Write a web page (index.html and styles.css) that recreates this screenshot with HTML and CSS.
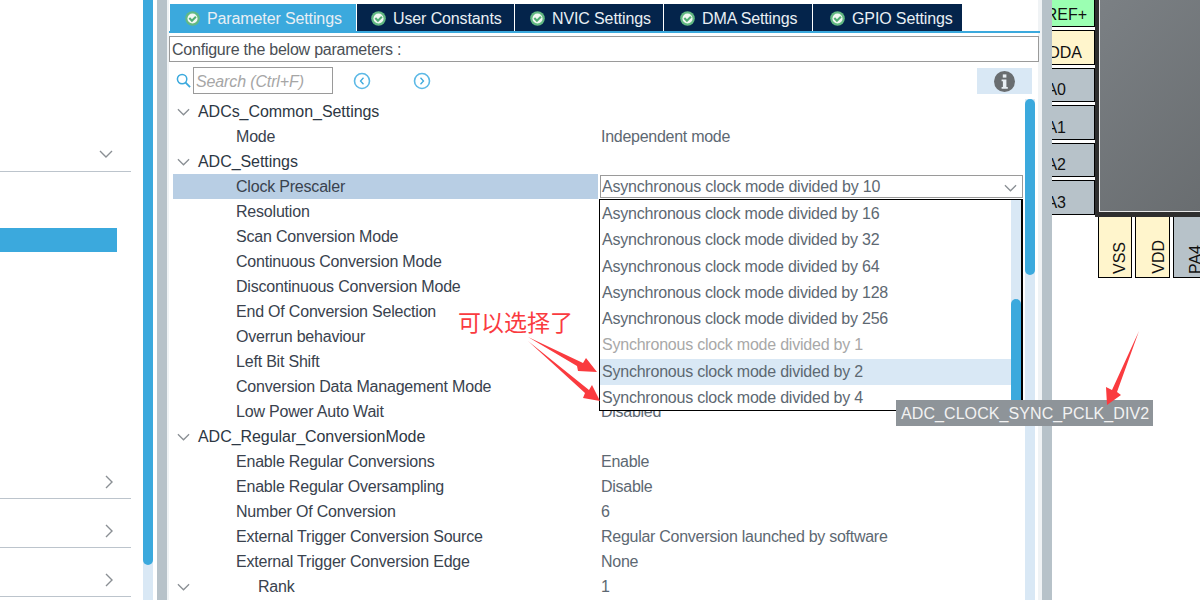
FILE: index.html
```html
<!DOCTYPE html>
<html lang="en">
<head>
<meta charset="utf-8">
<title>ADC Configuration</title>
<link rel="stylesheet" href="styles.css">
</head>
<body>
<svg class="defs" width="0" height="0" aria-hidden="true">
  <symbol id="ok" viewBox="0 0 16 16">
    <circle cx="8" cy="8" r="7.8" fill="#62b983"/>
    <circle cx="8" cy="8" r="5.4" fill="#f2f8f4"/>
    <path d="M4.6 7.4 7.4 10.4 11.6 6.2" fill="none" stroke="#4fae73" stroke-width="2.2"/>
  </symbol>
  <symbol id="down" viewBox="0 0 14 8"><path d="M1 1 7 7 13 1" fill="none" stroke="#8a8f94" stroke-width="1.4"/></symbol>
  <symbol id="right" viewBox="0 0 8 14"><path d="M1 1 7 7 1 13" fill="none" stroke="#8a8f94" stroke-width="1.4"/></symbol>
</svg>
<div class="app">
  <aside class="sidebar">
    <div class="side-row side-first"><svg class="chev-down"><use href="#down"/></svg></div>
    <div class="side-selected"></div>
    <div class="side-row side-tall"><svg class="chev-right"><use href="#right"/></svg></div>
    <div class="side-row"><svg class="chev-right"><use href="#right"/></svg></div>
    <div class="side-row"><svg class="chev-right"><use href="#right"/></svg></div>
  </aside>
  <div class="side-scroll"><div class="side-thumb"></div></div>
  <div class="divider"></div>
  <main class="panel">
    <nav class="tabs">
      <div class="tab tab-active w186"><svg class="ok"><use href="#ok"/></svg>Parameter Settings</div>
      <div class="tab w157"><svg class="ok"><use href="#ok"/></svg>User Constants</div>
      <div class="tab w148"><svg class="ok"><use href="#ok"/></svg>NVIC Settings</div>
      <div class="tab w148b"><svg class="ok"><use href="#ok"/></svg>DMA Settings</div>
      <div class="tab w149"><svg class="ok"><use href="#ok"/></svg>GPIO Settings</div>
    </nav>
    <div class="config-box">Configure the below parameters :</div>
    <div class="toolbar">
      <svg class="search-icon" viewBox="0 0 16 16"><circle cx="6.5" cy="6.5" r="5" fill="none" stroke="#3ba9dd" stroke-width="1.6"/><path d="M10 10 15 15" stroke="#3ba9dd" stroke-width="2"/></svg>
      <div class="search">Search (Ctrl+F)</div>
      <svg class="nav-icon nav-prev" viewBox="0 0 18 18"><circle cx="9" cy="9" r="7.5" fill="none" stroke="#5cb9e6" stroke-width="1.6"/><path d="M10.5 5.8 7.5 9 10.5 12.2" fill="none" stroke="#3ba9dd" stroke-width="1.3"/></svg>
      <svg class="nav-icon nav-next" viewBox="0 0 18 18"><circle cx="9" cy="9" r="7.5" fill="none" stroke="#5cb9e6" stroke-width="1.6"/><path d="M7.5 5.8 10.5 9 7.5 12.2" fill="none" stroke="#3ba9dd" stroke-width="1.3"/></svg>
      <div class="info"><svg class="info-icon" viewBox="0 0 21 21"><circle cx="10.5" cy="10.5" r="10.5" fill="#696d70"/><rect x="8.8" y="3.4" width="3.6" height="3.2" fill="#e8eef3"/><path d="M7.6 8.4h4.8v7.6h1.4v1.8H7.6V16h1.3v-5.8H7.6z" fill="#e8eef3"/></svg></div>
    </div>
    <div class="tree-wrap">
      <div class="tree">
        <div class="row group"><svg class="tw"><use href="#down"/></svg><span class="name">ADCs_Common_Settings</span></div>
        <div class="row"><span class="name">Mode</span><span class="val">Independent mode</span></div>
        <div class="row group"><svg class="tw"><use href="#down"/></svg><span class="name">ADC_Settings</span></div>
        <div class="row row-sel"><span class="name">Clock Prescaler</span></div>
        <div class="row"><span class="name">Resolution</span></div>
        <div class="row"><span class="name">Scan Conversion Mode</span></div>
        <div class="row"><span class="name">Continuous Conversion Mode</span></div>
        <div class="row"><span class="name">Discontinuous Conversion Mode</span></div>
        <div class="row"><span class="name">End Of Conversion Selection</span></div>
        <div class="row"><span class="name">Overrun behaviour</span></div>
        <div class="row"><span class="name">Left Bit Shift</span></div>
        <div class="row"><span class="name">Conversion Data Management Mode</span></div>
        <div class="row"><span class="name">Low Power Auto Wait</span><span class="val">Disabled</span></div>
        <div class="row group"><svg class="tw"><use href="#down"/></svg><span class="name">ADC_Regular_ConversionMode</span></div>
        <div class="row"><span class="name">Enable Regular Conversions</span><span class="val">Enable</span></div>
        <div class="row"><span class="name">Enable Regular Oversampling</span><span class="val">Disable</span></div>
        <div class="row"><span class="name">Number Of Conversion</span><span class="val">6</span></div>
        <div class="row"><span class="name">External Trigger Conversion Source</span><span class="val">Regular Conversion launched by software</span></div>
        <div class="row"><span class="name">External Trigger Conversion Edge</span><span class="val">None</span></div>
        <div class="row sub"><svg class="tw"><use href="#down"/></svg><span class="name">Rank</span><span class="val">1</span></div>
      </div>
      <div class="tree-scroll"><div class="tree-thumb"></div></div>
    </div>
  </main>
  <div class="divider"></div>
  <section class="chip-area">
    <div class="pins-left">
      <div class="pin pin-green pin-a">VREF+</div>
      <div class="pin pin-yellow pin-b">VDDA</div>
      <div class="pin pin-grey pin-c">PA0</div>
      <div class="pin pin-grey pin-c">PA1</div>
      <div class="pin pin-grey pin-c">PA2</div>
      <div class="pin pin-grey pin-c">PA3</div>
    </div>
    <div class="chip-col">
      <div class="chip"></div>
      <div class="pins-bottom">
        <div class="bpin pin-yellow w34"><span>VSS</span></div>
        <div class="bpin pin-yellow w35"><span>VDD</span></div>
        <div class="bpin pin-grey w27"><span>PA4</span></div>
      </div>
    </div>
  </section>

  <div class="combo">Asynchronous clock mode divided by 10<svg class="combo-chev"><use href="#down"/></svg></div>
  <div class="popup">
    <ul class="popup-list">
      <li>Asynchronous clock mode divided by 16</li>
      <li>Asynchronous clock mode divided by 32</li>
      <li>Asynchronous clock mode divided by 64</li>
      <li>Asynchronous clock mode divided by 128</li>
      <li>Asynchronous clock mode divided by 256</li>
      <li class="disabled">Synchronous clock mode divided by 1</li>
      <li class="hover">Synchronous clock mode divided by 2</li>
      <li>Synchronous clock mode divided by 4</li>
    </ul>
    <div class="popup-scroll"><div class="popup-thumb"></div></div>
  </div>
  <div class="tooltip">ADC_CLOCK_SYNC_PCLK_DIV2</div>
  <div class="note" lang="zh">可以选择了</div>
  <svg class="arrows" viewBox="0 0 1200 600" aria-hidden="true">
    <path d="M528 337 583 363 586 358 597 372 578 371 577 366Z" fill="#fa3b3f"/>
    <path d="M528 341 589 390 592 385 600 401 583 398 585 393Z" fill="#fa3b3f"/>
    <path d="M1139 331 1117 392 1121 395 1107 405 1106 387 1112 390Z" fill="#fa3b3f"/>
  </svg>
</div>
</body>
</html>
```

FILE: styles.css
```css
* { box-sizing: border-box; }
html, body { margin: 0; padding: 0; }
body { width: 1200px; height: 600px; overflow: hidden; background: #fff; font-family: "Liberation Sans", Arial, sans-serif; font-size: 16px; letter-spacing: -0.2px; color: #39424e; }
.defs { position: absolute; }
.app { position: relative; width: 1200px; height: 600px; display: flex; overflow: hidden; }

/* left sidebar */
.sidebar { width: 143px; flex: none; display: flex; flex-direction: column; }
.side-row { width: 131px; height: 49px; border-bottom: 1px solid #bcc4cc; display: flex; align-items: center; justify-content: flex-end; padding: 15px 18px 0 0; }
.side-first { height: 172px; padding-top: 136px; }
.side-selected { width: 117px; height: 24px; margin-top: 56px; background: #3ba9dd; }
.side-tall { height: 247px; padding-top: 214px; }
.chev-down { width: 14px; height: 8px; }
.chev-right { width: 8px; height: 14px; }
.side-scroll { width: 10px; flex: none; background: #d9e8f5; }
.side-thumb { height: 565px; background: #3ba9dd; border-radius: 0 0 5px 5px; }
.divider { width: 10px; flex: none; background: #b7c2c9; margin-left: 4px; }
.panel + .divider { margin-left: 0; }

/* panel */
.panel { width: 875px; flex: none; border-left: 2px solid #f0f3f5; padding-top: 4px; display: flex; flex-direction: column; background: linear-gradient(to left, #f0f3f5 4px, #fff 4px); }
.tabs { display: flex; height: 29px; margin-right: 2px; border-bottom: 2px solid #3ba9dd; padding-left: 1px; gap: 1px; }
.tab { height: 27px; background: #04244b; color: #e9eff4; display: flex; align-items: center; justify-content: flex-start; padding: 3px 0 0 15px; gap: 7px; letter-spacing: -0.12px; }
.tab-active { background: #3ba9dd; }
.w186 { width: 186px; }
.w157 { width: 157px; padding-left: 14px; }
.w148 { width: 148px; }
.w148b { width: 148px; padding-left: 16px; }
.w149 { width: 149px; padding-left: 17px; }
.ok { width: 15px; height: 15px; flex: none; margin-top: -2px; }
.config-box { height: 26px; margin-top: 3px; width: 870px; border: 1px solid #9a9a9a; line-height: 26px; padding-left: 2px; color: #4a4f55; letter-spacing: -0.23px; }
.toolbar { height: 37px; display: flex; align-items: flex-start; padding-top: 5px; position: relative; }
.search-icon { width: 15px; height: 15px; margin: 6px 0 0 7px; flex: none; }
.search { width: 140px; height: 27px; margin-left: 2px; border: 1px solid #9a9a9a; line-height: 28px; padding-left: 2px; font-style: italic; color: #a6a6a6; flex: none; letter-spacing: -0.13px; }
.nav-icon { width: 18px; height: 18px; flex: none; margin-top: 5px; }
.nav-prev { margin-left: 20px; }
.nav-next { margin-left: 42px; }
.info { width: 55px; height: 26px; margin-left: 546px; margin-top: 1px; background: #d9e8f5; display: flex; align-items: center; justify-content: center; flex: none; }
.info-icon { width: 21px; height: 21px; }

/* tree */
.tree-wrap { flex: 1; display: flex; min-height: 0; }
.tree { width: 854px; flex: none; overflow: hidden; }
.row { height: 25px; display: flex; align-items: center; position: relative; padding-left: 67px; line-height: 25px; white-space: nowrap; }
.row.group { padding-left: 8px; letter-spacing: -0.05px; }
.row.sub { padding-left: 8px; }
.tw { width: 13px; height: 8px; flex: none; margin-right: 8px; }
.row.sub .name { margin-left: 68px; }
.row.sub .tw { margin-right: 0; }
.row.group .name { color: #2d3743; }
.name { flex: none; color: #39424e; }
.val { position: absolute; left: 432px; color: #5d6872; letter-spacing: -0.27px; }
.row-sel { background: #b8cee4; margin-left: 4px; padding-left: 63px; width: 425px; }
.tree-scroll { width: 10px; margin-left: 2px; flex: none; background: #d9e8f5; }
.tree-thumb { height: 176px; background: #3ba9dd; border-radius: 5px; }

/* chip */
.chip-area { flex: 1; display: flex; min-width: 0; overflow: hidden; }
.pins-left { width: 43px; flex: none; display: flex; flex-direction: column; gap: 3px; }
.pin { width: 43px; border: 1px solid #000; border-left: 0; color: #111; line-height: 1; display: flex; align-items: center; justify-content: flex-end; overflow: hidden; white-space: nowrap; letter-spacing: 0; }
.pin-green { background: #9bffb2; }
.pin-yellow { background: #fff5cc; }
.pin-grey { background: #b7c2c9; }
.pin-a { height: 27px; border-top: 0; padding: 4px 7px 0 0; }
.pin-b { height: 34.5px; padding: 11px 12px 0 0; }
.pin-c { height: 34.5px; padding: 11px 28px 0 0; }
.chip-col { flex: 1; display: flex; flex-direction: column; }
.chip { height: 217px; border: solid #2e2e2e; border-width: 0 0 5px 4px; box-shadow: inset 1px -1px 0 #e8e8e8; background: linear-gradient(135deg, #7b8084, #686c6f); flex: none; }
.pins-bottom { display: flex; gap: 3px; padding-left: 3px; }
.bpin { height: 61px; border: 1px solid #000; border-top: 0; flex: none; display: flex; align-items: flex-end; justify-content: center; overflow: hidden; letter-spacing: 0; }
.bpin span { writing-mode: vertical-rl; transform: rotate(180deg); color: #111; padding-top: 3px; }
.w34 { width: 34px; padding-left: 10px; }
.w35 { width: 35px; padding-left: 12px; }
.w27 { width: 46px; }

/* overlays */
.combo { position: absolute; left: 600px; top: 175px; width: 423px; height: 23px; background: #fff; border: 1px solid #9a9a9a; line-height: 21px; padding-left: 1px; color: #5d6872; }
.combo-chev { position: absolute; right: 5px; top: 8px; width: 13px; height: 8px; }
.popup { position: absolute; left: 599px; top: 199px; width: 424px; height: 212px; background: #fff; border: solid #000; border-width: 1px 2px 1px 1px; display: flex; }
.popup-list { list-style: none; margin: 0; padding: 1px 0 0; flex: 1; letter-spacing: -0.22px; }
.popup-list li { height: 26.25px; line-height: 26px; padding-left: 2px; color: #5d6872; white-space: nowrap; }
.popup-list li.disabled { color: #a8a8a8; }
.popup-list li.hover { background: #d9e8f5; }
.popup-scroll { width: 10px; flex: none; background: #d9e8f5; padding-top: 99px; }
.popup-thumb { height: 111px; background: #3ba9dd; border-radius: 5px 5px 0 0; }
.tooltip { position: absolute; left: 896px; top: 400px; width: 257px; height: 26px; background: #8e9499; color: #f2f2f2; line-height: 27px; padding-left: 5px; white-space: nowrap; letter-spacing: 0.08px; }
.note { position: absolute; left: 458px; top: 306px; font: 23px/30px "Noto Sans CJK SC", sans-serif; letter-spacing: 0; color: #fa3b3f; }
.arrows { position: absolute; left: 0; top: 0; width: 1200px; height: 600px; pointer-events: none; }
```
